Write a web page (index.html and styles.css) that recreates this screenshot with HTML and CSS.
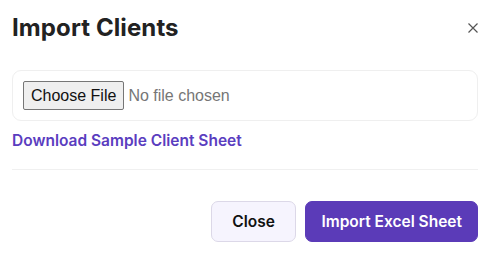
FILE: index.html
```html
<!DOCTYPE html>
<html lang="en">
<head>
<meta charset="utf-8">
<title>Import Clients</title>
<link rel="stylesheet" href="styles.css">
</head>
<body>
<div class="modal">
  <div class="modal-header">
    <h2 class="modal-title">Import Clients</h2>
    <button class="close-x" type="button" aria-label="Close">
      <svg width="10" height="10" viewBox="0 0 10 10"><path d="M0.5 0.5L9.5 9.5M9.5 0.5L0.5 9.5" stroke="#555" stroke-width="1.2" fill="none"/></svg>
    </button>
  </div>
  <div class="file-box">
    <input class="file-input" type="file">
  </div>
  <a class="sample-link" href="#">Download Sample Client Sheet</a>
  <div class="divider"></div>
  <div class="modal-footer">
    <button class="btn btn-light" type="button">Close</button>
    <button class="btn btn-primary" type="button">Import Excel Sheet</button>
  </div>
</div>
</body>
</html>
```

FILE: styles.css
```css
html, body {
  margin: 0;
  padding: 0;
  background: #ffffff;
}
body {
  font-family: Inter, "Noto Sans", sans-serif;
  color: #222222;
}
.modal {
  padding: 12px 13px 0 12px;
  display: flex;
  flex-direction: column;
}
.modal-header {
  display: flex;
  align-items: center;
  justify-content: space-between;
  height: 32px;
}
.modal-title {
  margin: 0;
  font-size: 24px;
  font-weight: 700;
  line-height: 32px;
  color: #222222;
  letter-spacing: 0.1px;
}
.close-x {
  border: 0;
  background: transparent;
  padding: 0;
  width: 10px;
  height: 10px;
  display: flex;
}
.file-box {
  margin-top: 26px;
  border: 1px solid #efefef;
  border-radius: 9px;
  padding: 10px;
  display: flex;
  align-items: center;
}
.file-input {
  font-family: "Liberation Sans", Arial, sans-serif;
  font-size: 16px;
  color: #767676;
  height: 29px;
}
.file-input::file-selector-button {
  font-family: "Liberation Sans", Arial, sans-serif;
  font-size: 16px;
  color: #111111;
  background: #efefef;
  border: 1px solid #767676;
  border-radius: 2px;
  padding: 4px 7px;
  height: 29px;
  margin-right: 4px;
}
.sample-link {
  margin-top: 8px;
  font-size: 15.5px;
  line-height: 24px;
  font-weight: 600;
  color: #5a3dbf;
  text-decoration: none;
  align-self: flex-start;
}
.divider {
  margin-top: 16px;
  height: 1px;
  background: #f0f0f0;
}
.modal-footer {
  margin-top: 31px;
  display: flex;
  justify-content: flex-end;
  gap: 9px;
}
.btn {
  height: 41px;
  border-radius: 7px;
  font-family: Inter, "Noto Sans", sans-serif;
  font-size: 15.5px;
  font-weight: 600;
  cursor: pointer;
}
.btn-light {
  background: #f6f4fe;
  border: 1px solid #dcd8e8;
  color: #111111;
  padding: 0 20.5px;
}
.btn-primary {
  background: #5b3bb8;
  border: 1px solid #5b3bb8;
  color: #ffffff;
  padding: 0 15px;
}
```
